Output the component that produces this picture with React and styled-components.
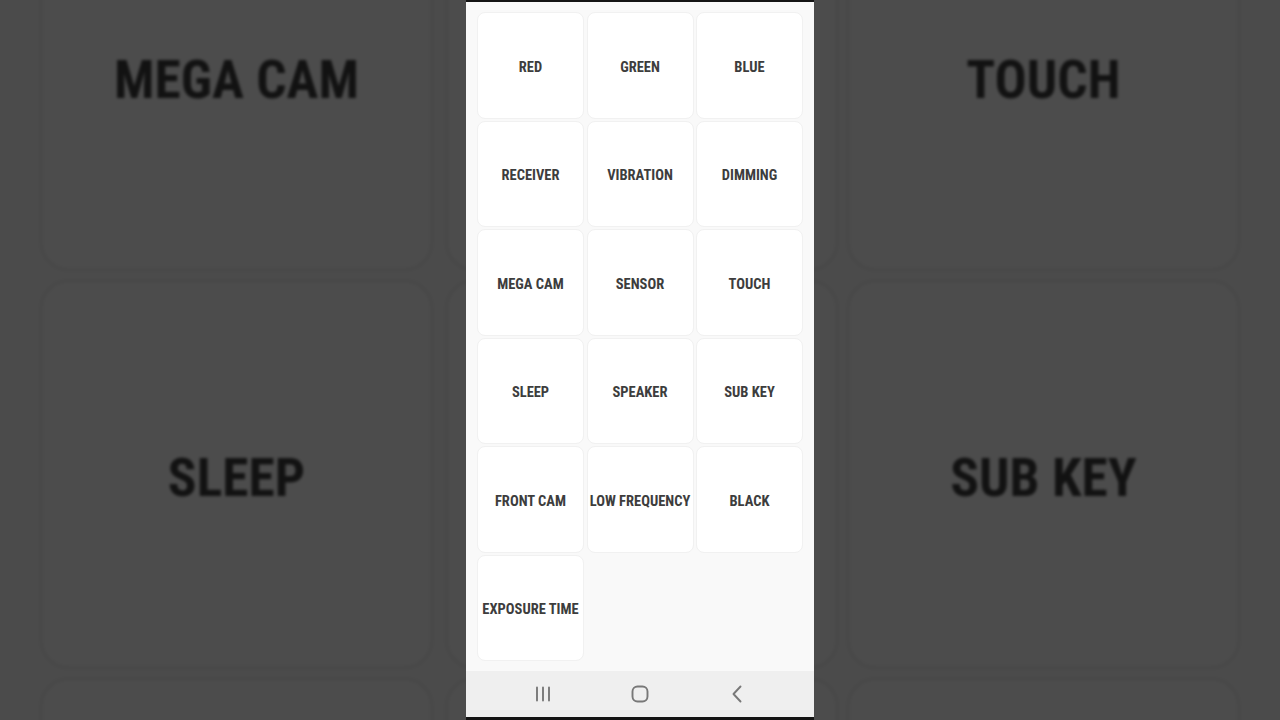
import React from "react";
import styled, { createGlobalStyle } from "styled-components";

const Global = createGlobalStyle`
  html, body { margin: 0; padding: 0; background: #4b4b4b; }
  body { width: 1280px; height: 720px; overflow: hidden; }
`;

const ITEMS = [
  "RED", "GREEN", "BLUE",
  "RECEIVER", "VIBRATION", "DIMMING",
  "MEGA CAM", "SENSOR", "TOUCH",
  "SLEEP", "SPEAKER", "SUB KEY",
  "FRONT CAM", "LOW FREQUENCY", "BLACK",
  "EXPOSURE TIME",
];

const Stage = styled.div`
  position: relative;
  width: 1280px;
  height: 720px;
  overflow: hidden;
  background: #4b4b4b;
  display: flex;
  justify-content: center;
`;

const Backdrop = styled.div`
  position: absolute;
  inset: 0;
  display: flex;
  justify-content: center;
  transform: scale(3.685);
  transform-origin: 640px 360px;
  filter: brightness(0.3) blur(0.5px);
  pointer-events: none;
`;

const PhoneFrame = styled.div`
  position: relative;
  width: 348px;
  height: 720px;
  display: flex;
  flex-direction: column;
  background: #f9f9f9;
`;

const TopStrip = styled.div`
  height: 2px;
  background: #141414;
  flex: none;
`;

const Content = styled.div`
  flex: 1;
  padding: 10px 11px 0;
  background: #f9f9f9;
`;

const Grid = styled.div`
  display: grid;
  grid-template-columns: repeat(3, 107px);
  grid-auto-rows: 106.5px;
  column-gap: 2.5px;
  row-gap: 2px;
`;

const Cell = styled.div`
  background: #ffffff;
  border: 1px solid #f1f1f1;
  border-radius: 8px;
  box-sizing: border-box;
  display: flex;
  align-items: center;
  justify-content: center;
  padding-top: 4px;
`;

const Label = styled.span`
  font-family: "Roboto Condensed", "Roboto", "Liberation Sans", sans-serif;
  font-weight: 700;
  font-size: 14.5px;
  color: #3d3d3d;
  white-space: nowrap;
`;

const NavBar = styled.div`
  height: 46px;
  flex: none;
  background: #efefef;
  display: grid;
  grid-template-columns: repeat(3, 97px);
  justify-content: center;
  align-items: center;
  justify-items: center;
`;

const BottomStrip = styled.div`
  height: 3px;
  background: #141414;
  flex: none;
`;

const NavIcon = styled.svg`
  display: block;
  stroke: #787878;
  fill: none;
`;

function Phone() {
  return (
    <PhoneFrame>
      <TopStrip />
      <Content>
        <Grid>
          {ITEMS.map((t) => (
            <Cell key={t}>
              <Label>{t}</Label>
            </Cell>
          ))}
        </Grid>
      </Content>
      <NavBar>
        <NavIcon width="18" height="16" viewBox="0 0 18 16">
          <path d="M3 1.5v13M9 1.5v13M15 1.5v13" strokeWidth="1.9" strokeLinecap="round" />
        </NavIcon>
        <NavIcon width="18" height="18" viewBox="0 0 18 18">
          <rect x="1.5" y="1.5" width="15" height="15" rx="5" strokeWidth="1.9" />
        </NavIcon>
        <NavIcon width="12" height="18" viewBox="0 0 12 18">
          <path d="M9.5 1.5L2.5 9l7 7.5" strokeWidth="1.9" strokeLinecap="round" strokeLinejoin="round" />
        </NavIcon>
      </NavBar>
      <BottomStrip />
    </PhoneFrame>
  );
}

export default function App() {
  return (
    <>
      <Global />
      <Stage>
        <Backdrop>
          <Phone />
        </Backdrop>
        <Phone />
      </Stage>
    </>
  );
}
